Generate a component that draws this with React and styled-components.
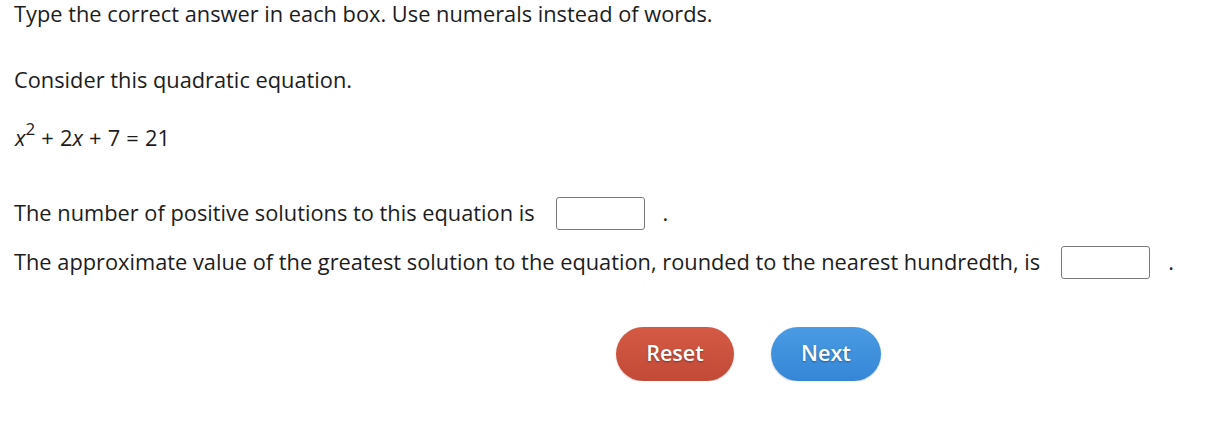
import React from "react";
import styled, { createGlobalStyle } from "styled-components";

const Global = createGlobalStyle`
  html, body { margin: 0; padding: 0; background: #fff; }
  body { font-family: "Open Sans", "Noto Sans", sans-serif; color: #1c1c1c; }
`;

const Page = styled.div`
  padding: 0 14px;
  font-size: 21.8px;
  line-height: 28px;
`;

const Para = styled.p`
  margin: 0;
  margin-top: ${(p) => p.$mt || 0}px;
`;

const Equation = styled.p`
  margin: 0;
  margin-top: ${(p) => p.$mt || 0}px;
  padding-left: 1px;
  word-spacing: 0.5px;
  i { font-style: italic; }
  sup { font-size: 17px; line-height: 0; position: relative; top: -3px; margin-left: 0; }
`;

const Row = styled.div`
  display: flex;
  align-items: center;
  margin-top: ${(p) => p.$mt || 0}px;
  height: 34px;
`;

const Box = styled.input`
  box-sizing: border-box;
  width: 89px;
  height: 33px;
  margin-left: 21px;
  border: 1px solid #7a7a7a;
  border-radius: 3px;
  background: #fff;
  font: inherit;
  padding: 0 6px;
`;

const Dot = styled.span`
  margin-left: 18px;
`;

const Buttons = styled.div`
  display: flex;
  gap: 37px;
  margin-top: 48px;
  padding-left: 602px;
`;

const Btn = styled.button`
  height: 54px;
  width: ${(p) => p.$w}px;
  border: none;
  border-radius: 27px;
  padding: 0 0 3px;
  font-family: "Open Sans", sans-serif;
  font-size: 21.6px;
  font-weight: 600;
  color: #fff;
  text-shadow: 0 1px 2px rgba(0, 0, 0, 0.35);
  background: ${(p) => p.$bg};
  box-shadow: 0 1px 2px rgba(0, 0, 0, 0.2);
  cursor: pointer;
`;

export default function App() {
  return (
    <>
      <Global />
      <Page>
        <Para>Type the correct answer in each box. Use numerals instead of words.</Para>
        <Para $mt={38}>Consider this quadratic equation.</Para>
        <Equation $mt={30}>
          <i>x</i><sup>2</sup> + 2<i>x</i> + 7 = 21
        </Equation>
        <Row $mt={44}>
          The number of positive solutions to this equation is
          <Box aria-label="answer 1" />
          <Dot>.</Dot>
        </Row>
        <Row $mt={15}>
          The approximate value of the greatest solution to the equation, rounded to the nearest hundredth, is
          <Box aria-label="answer 2" />
          <Dot>.</Dot>
        </Row>
        <Buttons>
          <Btn $w={118} $bg="linear-gradient(#d45a45, #c24a36)">Reset</Btn>
          <Btn $w={110} $bg="linear-gradient(#4a9be3, #3586d6)">Next</Btn>
        </Buttons>
      </Page>
    </>
  );
}
